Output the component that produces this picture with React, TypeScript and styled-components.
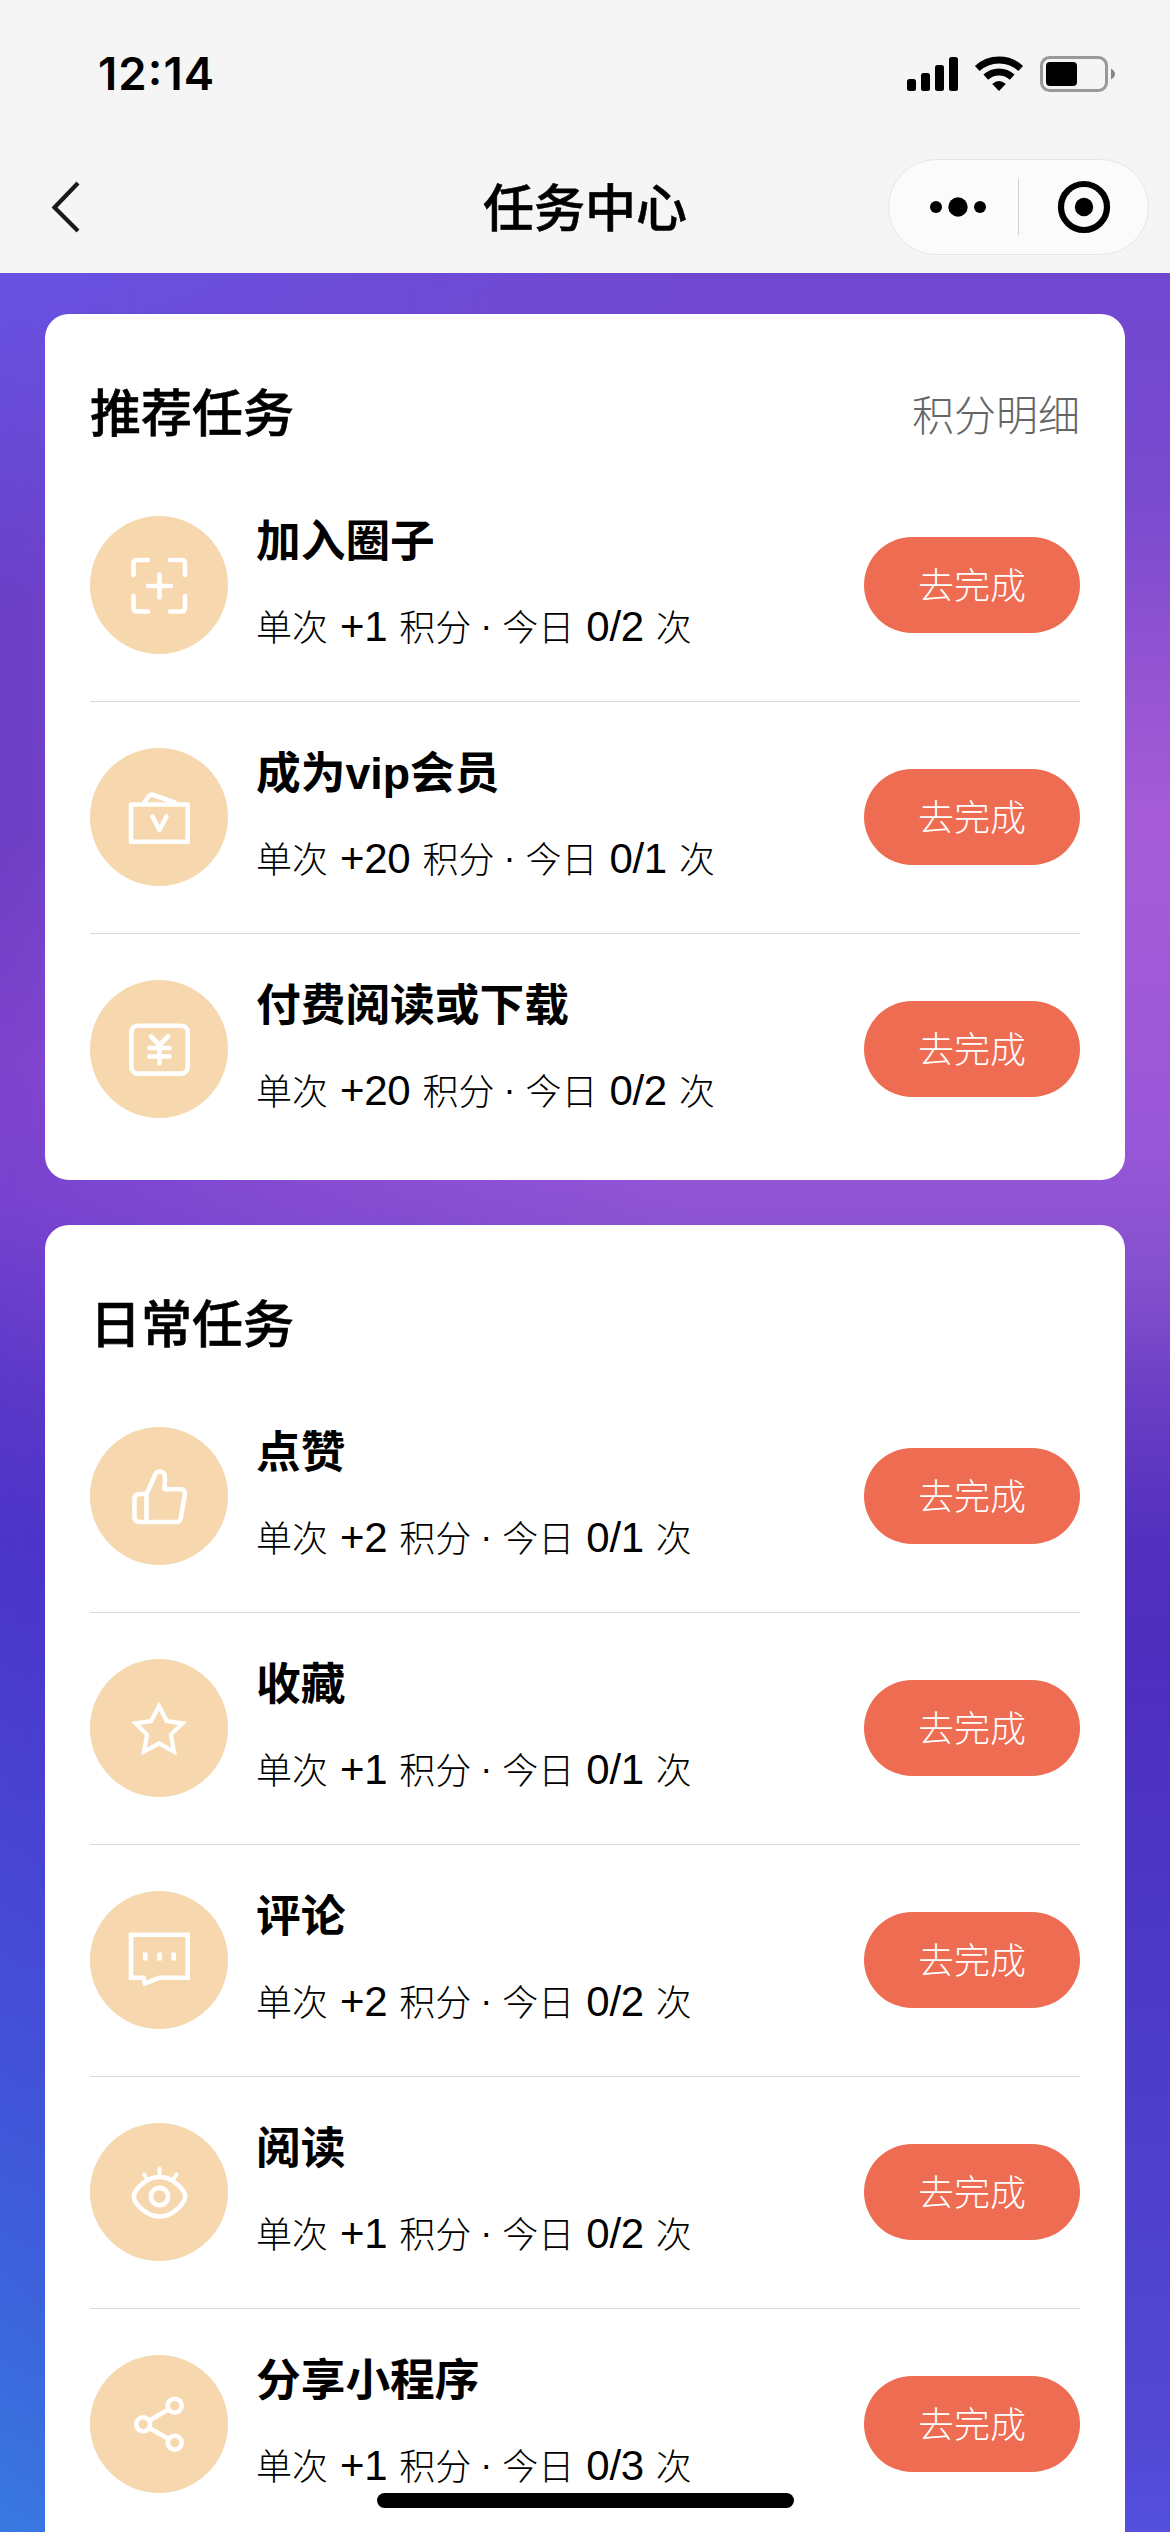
import React from 'react';
import styled, { createGlobalStyle } from 'styled-components';

const Global = createGlobalStyle`
  * { box-sizing: border-box; }
  html, body { margin: 0; padding: 0; }
  body {
    font-family: "Liberation Sans", "Noto Sans CJK SC", sans-serif;
    color: #000;
    background: #f5f5f5;
  }
`;

const CJK = '"Noto Sans CJK SC", sans-serif';

const Screen = styled.div`
  display: flex;
  flex-direction: column;
  width: 1170px;
  height: 2532px;
  overflow: hidden;
`;

const Header = styled.header`
  flex: none;
  height: 273px;
  background: #f5f5f5;
`;

const StatusBar = styled.div`
  display: flex;
  align-items: center;
  justify-content: space-between;
  height: 148px;
  padding: 0 54px 0 98px;
`;

const Clock = styled.span`
  font: 600 45.5px/1 Inter, sans-serif;
  font-feature-settings: "case";
  letter-spacing: 1.1px;
`;

const StatusIcons = styled.svg`
  display: block;
  width: 210px;
  height: 40px;
`;

const NavBar = styled.div`
  display: grid;
  grid-template-columns: 1fr auto 1fr;
  align-items: center;
  height: 118px;
  padding: 0 21px 0 48px;
`;

const BackIcon = styled.svg`
  display: block;
  width: 36px;
  height: 56px;
`;

const NavTitle = styled.h1`
  margin: -3px 0 0 -27px;
  font: 500 51px/1.2 ${CJK};
  -webkit-text-stroke: 0.6px currentColor;
`;

const Capsule = styled.div`
  display: flex;
  align-items: center;
  justify-self: end;
  width: 261px;
  height: 96px;
  border: 1px solid #e6e6e6;
  border-radius: 48px;
  background: #fbfbfb;
`;

const CapsuleButton = styled.div`
  display: flex;
  flex: 1;
  justify-content: center;
`;

const CapsuleDivider = styled.div`
  width: 1px;
  height: 56px;
  background: #cfcfcf;
`;

const Content = styled.main`
  display: grid;
  flex: 1;
  min-height: 0;
  grid-template: 100% / 100%;
  background: linear-gradient(
    180deg,
    #6852e3 0px, #6849d5 187px, #6c40c8 330px, #6d3fc5 560px, #7f43cd 790px,
    #7843d0 925px, #5a38c9 1125px, #4c35ca 1270px, #4846d3 1580px,
    #4254d9 1800px, #3c64dd 2020px, #387ae1 2259px
  );

  &::before {
    content: "";
    grid-area: 1 / 1;
    background: linear-gradient(
      180deg,
      #7048d0 0px, #784ace 215px, #9454d2 405px, #a65cd6 545px, #a05ad8 720px,
      #9857d8 865px, #8450cd 1010px, #6a3ec4 1125px, #5230be 1270px,
      #4e2ebe 1385px, #4c35c5 1590px, #4e3fcd 1875px, #5248d4 2160px, #5450dc 2259px
    );
    mask-image: linear-gradient(90deg, transparent 0%, rgba(0, 0, 0, 0.55) 28%, #000 58%);
  }
`;

const CardList = styled.div`
  z-index: 1;
  display: flex;
  flex-direction: column;
  gap: 45px;
  grid-area: 1 / 1;
  min-height: 0;
  padding: 41px 45px 0;
`;

const Card = styled.section`
  flex: none;
  padding: 62px 45px;
  border-radius: 24px;
  background: #fff;
`;

const CardHead = styled.div`
  display: flex;
  align-items: center;
  justify-content: space-between;
  height: 76px;
  margin-bottom: 64px;
`;

const CardTitle = styled.h2`
  margin: -8px 0 0;
  font: 500 51px/76px ${CJK};
  -webkit-text-stroke: 0.6px currentColor;
`;

const DetailLink = styled.span`
  margin-top: -2px;
  color: #666;
  font: 300 42px/76px ${CJK};
`;

const Rows = styled.div`
  display: flex;
  flex-direction: column;
`;

const Row = styled.div<{ $last?: boolean }>`
  display: flex;
  align-items: center;
  height: ${(p) => (p.$last ? 184 : 232)}px;
  padding: ${(p) => (p.$last ? '46px 0 0' : '46px 0 47px')};
  border-bottom: ${(p) => (p.$last ? 'none' : '1px solid #d9d9d9')};

  &:first-child { height: 186px; padding-top: 0; }
`;

const IconCircle = styled.div`
  flex: none;
  width: 138px;
  height: 138px;
  border-radius: 50%;
  background: #f6d7ae;
`;

const TaskIcon = styled.svg`
  display: block;
  width: 138px;
  height: 138px;
  fill: none;
  stroke: #fff;
  stroke-width: 4.6;
  stroke-linecap: round;
  stroke-linejoin: round;
`;

const Info = styled.div`
  display: flex;
  flex: 1;
  flex-direction: column;
  gap: 25px;
  height: 138px;
  padding: 1px 0 0 28px;
`;

const TaskName = styled.div`
  height: 50px;
  font: 600 44.7px/50px "Liberation Sans", ${CJK};
  white-space: nowrap;
`;

const Reward = styled.div`
  height: 66px;
  font: 300 36px/66px ${CJK};
  white-space: nowrap;
`;

const Figure = styled.span`
  margin: 0 12px;
  font: 400 42px/50px "Liberation Sans", sans-serif;
  letter-spacing: -0.3px;
`;

const Dot = styled.span`
  margin: 0 10px 0 9px;
  font: 400 36px/50px "Liberation Sans", sans-serif;
  vertical-align: 3px;
`;

const GoButton = styled.button`
  flex: none;
  width: 216px;
  height: 96px;
  padding: 0 0 4px;
  border: 0;
  border-radius: 48px;
  color: #fff;
  background: #ee6c51;
  font: 300 36px/1 ${CJK};
`;

const HomeIndicator = styled.div`
  position: fixed;
  z-index: 2;
  top: 2493px;
  left: 377px;
  width: 417px;
  height: 15px;
  border-radius: 8px;
  background: #000;
`;

const icons = {
  join: (
    <path strokeWidth="4.600" d="M43.5 59V47.500Q43.500 44 47 44H58M80 44H91.500Q95 44 95 47.500V59M95 80V91.500Q95 95.500 91.500 95.500H80M58 95.500H47Q43.500 95.500 43.500 91.500V80M69.500 58.500V81.500M58 70H81" />
  ),
  vip: (
    <path d="M41 56.500H97.700V93.700H41ZM53.700 55.500L58.500 48.500Q60.500 45.800 63.500 47L84.500 54.500M62.500 68.500L69.500 82L76.500 68.500" />
  ),
  pay: (
    <>
      <rect x="41.300" y="45.800" width="56.500" height="47.800" rx="6.500" />
      <path d="M61 56.500L69.500 65L78 56.500M69.500 65V83.500M59.500 68H79.500M59.500 76.500H79.500" />
    </>
  ),
  like: (
    <path d="M56.500 67H49.500Q44.500 67 44.500 72V90Q44.500 95 49.500 95H86.500Q90 95 90.700 91.500L94.800 68Q95.500 62.300 91 62.300H74.500L75 52Q75 44.500 69.500 44.500Q66.800 44.500 65.500 47L56.500 67V95" />
  ),
  star: (
    <path strokeLinejoin="miter" strokeWidth="4.200" d="M69 47L76.800 62L92.500 64.300L80.900 75.600L84 92.500L69 84.500L54 92.500L57.100 75.600L45.500 64.300L61.200 62Z" />
  ),
  comment: (
    <>
      <path strokeLinejoin="miter" d="M41 43.700H97.700V86.700H69.500L55 92.500L53.500 86.700H41Z" />
      <path strokeLinecap="butt" d="M55.300 61.500V69.500M69.500 61.500V69.500M83.700 61.500V69.500" />
    </>
  ),
  read: (
    <>
      <path d="M43.800 73.500C43.800 68 55 54 69.500 54S95.200 68 95.200 73.500S84 93.500 69.500 93.500S43.800 79 43.800 73.500Z" />
      <circle cx="69.500" cy="73.500" r="8.600" />
      <path strokeWidth="4" d="M69.500 45.500V53M54 51.500L57 56M86.500 51.500L83.500 56" />
    </>
  ),
  share: (
    <>
      <circle cx="84.700" cy="50.700" r="7" />
      <circle cx="53.200" cy="69.300" r="7" />
      <circle cx="84.700" cy="87.700" r="7" />
      <path d="M59.500 65.500L78.500 54.500M59.500 73L78.500 84" />
    </>
  ),
};

type Task = { icon: keyof typeof icons; name: string; points: string; progress: string };

const groups: { title: string; link?: string; tasks: Task[] }[] = [
  {
    title: '推荐任务',
    link: '积分明细',
    tasks: [
      { icon: 'join', name: '加入圈子', points: '+1', progress: '0/2' },
      { icon: 'vip', name: '成为vip会员', points: '+20', progress: '0/1' },
      { icon: 'pay', name: '付费阅读或下载', points: '+20', progress: '0/2' },
    ],
  },
  {
    title: '日常任务',
    tasks: [
      { icon: 'like', name: '点赞', points: '+2', progress: '0/1' },
      { icon: 'star', name: '收藏', points: '+1', progress: '0/1' },
      { icon: 'comment', name: '评论', points: '+2', progress: '0/2' },
      { icon: 'read', name: '阅读', points: '+1', progress: '0/2' },
      { icon: 'share', name: '分享小程序', points: '+1', progress: '0/3' },
    ],
  },
];

export default function App() {
  return (
    <Screen>
      <Global />
      <Header>
        <StatusBar>
          <Clock>12:14</Clock>
          <StatusIcons viewBox="0 0 210 40">
            <rect x="1" y="25" width="9" height="12" rx="2.500" />
            <rect x="15" y="19" width="9" height="18" rx="2.500" />
            <rect x="29" y="11" width="9" height="26" rx="2.500" />
            <rect x="43" y="3" width="9" height="34" rx="2.500" />
            <g fill="none" stroke="#000" strokeWidth="7">
              <path d="M71.300 14.500A32 32 0 0 1 114.700 14.500" />
              <path d="M79.800 23.200A19.500 19.500 0 0 1 106.200 23.200" />
            </g>
            <path d="M93 37L86.200 30Q93 24 99.800 30Z" />
            <rect x="135.500" y="3.500" width="65" height="33" rx="8" fill="none" stroke="#999" strokeWidth="3" />
            <rect x="140" y="8" width="31" height="24" rx="4" />
            <path d="M205 14.500Q209 17 209 20T205 25.500Z" fill="#888" />
          </StatusIcons>
        </StatusBar>
        <NavBar>
          <BackIcon viewBox="0 0 36 56">
            <path d="M30 4L6.500 28.500L30 52" fill="none" stroke="#1a1a1a" strokeWidth="4.200" />
          </BackIcon>
          <NavTitle>任务中心</NavTitle>
          <Capsule>
            <CapsuleButton>
              <svg width="76" height="24" viewBox="0 0 76 24">
                <circle cx="20" cy="12" r="6" />
                <circle cx="42" cy="12" r="9.700" />
                <circle cx="64" cy="12" r="6" />
              </svg>
            </CapsuleButton>
            <CapsuleDivider />
            <CapsuleButton>
              <svg width="56" height="56" viewBox="0 0 56 56">
                <circle cx="28" cy="28" r="23" fill="none" stroke="#000" strokeWidth="6.200" />
                <circle cx="28" cy="28" r="9.200" />
              </svg>
            </CapsuleButton>
          </Capsule>
        </NavBar>
      </Header>
      <Content>
        <CardList>
          {groups.map((group) => (
            <Card key={group.title}>
              <CardHead>
                <CardTitle>{group.title}</CardTitle>
                {group.link && <DetailLink>{group.link}</DetailLink>}
              </CardHead>
              <Rows>
                {group.tasks.map((task, i) => (
                  <Row key={task.name} $last={i === group.tasks.length - 1}>
                    <IconCircle>
                      <TaskIcon viewBox="0 0 138 138">{icons[task.icon]}</TaskIcon>
                    </IconCircle>
                    <Info>
                      <TaskName>{task.name}</TaskName>
                      <Reward>
                        单次<Figure>{task.points}</Figure>积分<Dot>·</Dot>今日<Figure>{task.progress}</Figure>次
                      </Reward>
                    </Info>
                    <GoButton>去完成</GoButton>
                  </Row>
                ))}
              </Rows>
            </Card>
          ))}
        </CardList>
      </Content>
      <HomeIndicator />
    </Screen>
  );
}
